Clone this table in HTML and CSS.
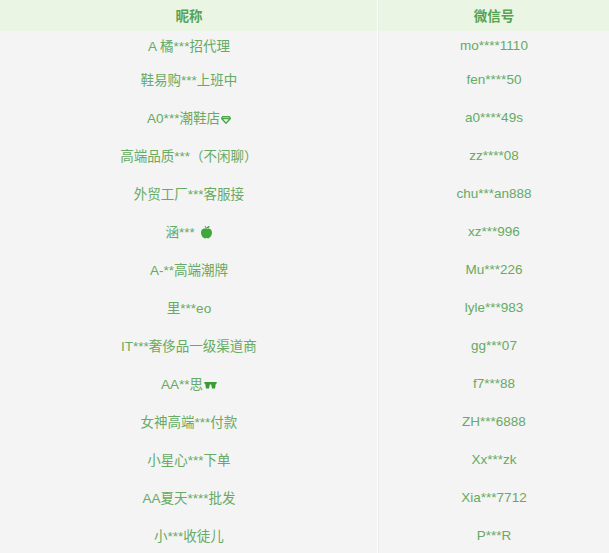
FILE: index.html
```html
<!DOCTYPE html>
<html lang="zh">
<head>
<meta charset="utf-8">
<title>昵称 微信号</title>
<link rel="stylesheet" href="styles.css">
</head>
<body>
<table class="list">
  <thead>
    <tr class="head"><th class="c1">昵称</th><th class="c2">微信号</th></tr>
  </thead>
  <tbody>
    <tr class="first"><td class="c1">A 橘***招代理</td><td class="c2">mo****1110</td></tr>
    <tr><td class="c1">鞋易购***上班中</td><td class="c2">fen****50</td></tr>
    <tr><td class="c1">A0***潮鞋店<svg class="ico dia" width="10" height="8" viewBox="0 0 10 8"><path d="M1.5 0.8H8.5L9.4 2.6L5 7.2L0.6 2.6Z M0.8 2.6H9.2" fill="none" stroke="#4ea64a" stroke-width="1.4" stroke-linejoin="round"/></svg></td><td class="c2">a0****49s</td></tr>
    <tr><td class="c1">高端品质***（不闲聊）</td><td class="c2">zz****08</td></tr>
    <tr><td class="c1">外贸工厂***客服接</td><td class="c2">chu***an888</td></tr>
    <tr><td class="c1">涵*** <svg class="ico apple" width="13" height="14" viewBox="0 0 13 14"><path d="M6.5 4.2C4.8 3 1 3.3 1 7.6C1 11 3.3 13.4 5 13.4C5.8 13.4 6 13 6.5 13C7 13 7.2 13.4 8 13.4C9.7 13.4 12 11 12 7.6C12 3.3 8.2 3 6.5 4.2Z" fill="#3fa83a"/><path d="M6.3 4.3C6.2 3 5.8 2 5 1.2" stroke="#2f7d2c" stroke-width="1" fill="none"/><path d="M6.6 3.2C7 1.6 8.6 1 9.8 1.3C9.4 2.6 8 3.4 6.6 3.2Z" fill="#2f8f2c"/></svg></td><td class="c2">xz***996</td></tr>
    <tr><td class="c1">A-**高端潮牌</td><td class="c2">Mu***226</td></tr>
    <tr><td class="c1">里***eo</td><td class="c2">lyle***983</td></tr>
    <tr><td class="c1">IT***奢侈品一级渠道商</td><td class="c2">gg***07</td></tr>
    <tr><td class="c1">AA**思<svg class="ico glass" width="13" height="9" viewBox="0 0 13 9"><path d="M0.3 1H12.7V2.6L11.8 2.8L11 7.6H8L7.2 3.6H5.8L5 7.6H2L1.2 2.8L0.3 2.6Z" fill="#3a9a36"/></svg></td><td class="c2">f7***88</td></tr>
    <tr><td class="c1">女神高端***付款</td><td class="c2">ZH***6888</td></tr>
    <tr><td class="c1">小星心***下单</td><td class="c2">Xx***zk</td></tr>
    <tr><td class="c1">AA夏天****批发</td><td class="c2">Xia***7712</td></tr>
    <tr><td class="c1">小***收徒儿</td><td class="c2">P***R</td></tr>
  </tbody>
</table>
</body>
</html>
```
FILE: styles.css
```css
html, body {
  margin: 0;
  padding: 0;
  background: #f4f4f4;
}
body {
  font-family: "Liberation Sans", "Noto Sans CJK SC", sans-serif;
  font-size: 13.5px;
  color: #66aa63;
}
.list {
  width: 609px;
  border-collapse: collapse;
  table-layout: fixed;
}
.list th, .list td {
  padding: 0;
  text-align: center;
  vertical-align: middle;
  white-space: nowrap;
}
.list .c1 {
  width: 378px;
  border-right: 1px solid #e9ece8;
  box-shadow: inset -1px 0 0 #fdfdfd;
}
.list .c2 {
  border-left: 1px solid #fcfcfc;
}
.head th {
  height: 30px;
  padding-bottom: 1px;
  background: #eaf5e3;
  color: #55a453;
  font-weight: bold;
  font-size: 13.5px;
}
.list td {
  height: 36px;
  padding-bottom: 2px;
  background: #f4f4f4;
}
.list tr.first td {
  height: 28px;
}
.ico {
  display: inline-block;
  vertical-align: -1px;
  margin-left: 1px;
}
.apple {
  vertical-align: -2px;
}
```
